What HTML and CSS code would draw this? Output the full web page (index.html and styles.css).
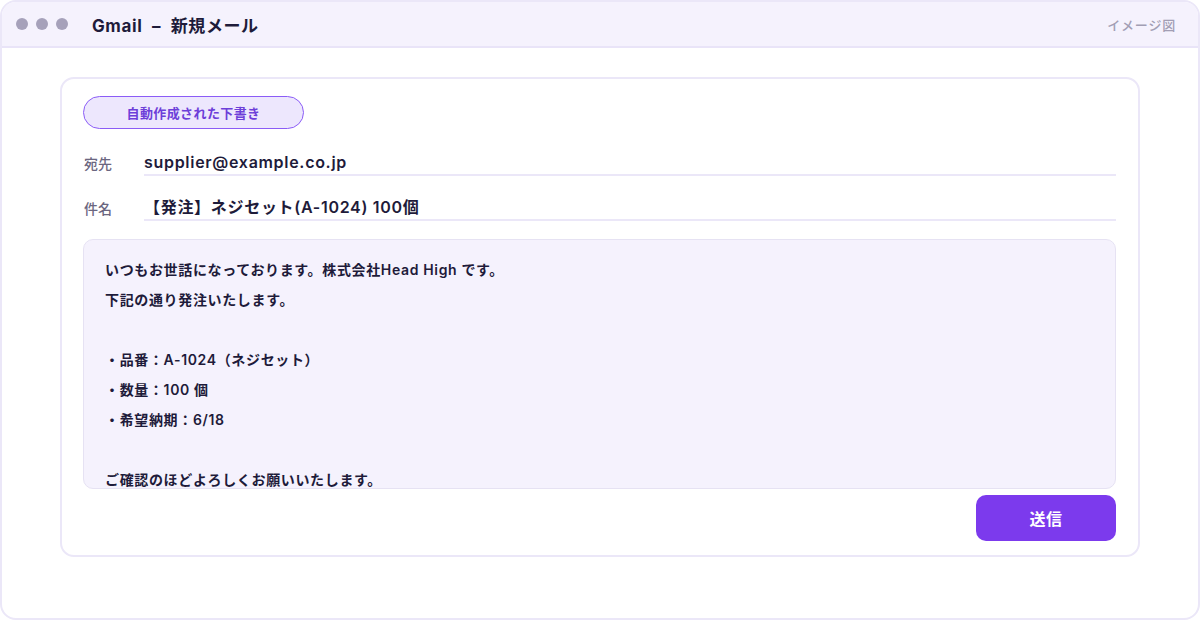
FILE: index.html
```html
<!DOCTYPE html>
<html>
  <head>
    <title>Gmail - 新規メール</title>
    <link rel="stylesheet" href="styles.css">
  </head>
  <body>
    <div class="window">
      <div class="titlebar">
        <div class="dots">
          <span class="dot"></span>
          <span class="dot"></span>
          <span class="dot"></span>
        </div>
        <div class="title">Gmail <span class="dash">–</span> 新規メール</div>
        <div class="note">イメージ図</div>
      </div>
      <div class="content">
        <div class="card">
          <div class="badge">自動作成された下書き</div>
          <div class="field first">
            <div class="label">宛先</div>
            <div class="value">supplier@example.co.jp</div>
          </div>
          <div class="field">
            <div class="label">件名</div>
            <div class="value">【発注】ネジセット(A-1024) 100個</div>
          </div>
          <div class="mailbody">
            <p>いつもお世話になっております。株式会社Head High です。</p>
            <p>下記の通り発注いたします。</p>
            <p>&nbsp;</p>
            <p>・品番：A-1024（ネジセット）</p>
            <p>・数量：100 個</p>
            <p>・希望納期：6/18</p>
            <p>&nbsp;</p>
            <p>ご確認のほどよろしくお願いいたします。</p>
          </div>
          <div class="actions">
            <button class="send">送信</button>
          </div>
        </div>
      </div>
    </div>
  </body>
</html>
```

FILE: styles.css
```css
body {
  margin: 0;
  font-family: Inter, "Noto Sans CJK JP", sans-serif;
  color: #1e1b3a;
  background: #fff;
}
.window {
  width: 1200px;
  height: 620px;
  box-sizing: border-box;
  border: 2px solid #ebe7f8;
  border-radius: 16px;
  overflow: hidden;
  background: #fff;
}
.titlebar {
  height: 44px;
  background: #f5f2fd;
  border-bottom: 2px solid #e9e4f8;
  display: flex;
  align-items: center;
  padding: 0 22px 0 14px;
}
.dots {
  display: flex;
  gap: 8px;
}
.dot {
  width: 12px;
  height: 12px;
  border-radius: 50%;
  background: #a6a1ba;
}
.title {
  margin-left: 24px;
  font-size: 17px;
  font-weight: 700;
  letter-spacing: 0.6px;
  color: #1e1b3a;
}
.dash {
  margin: 0 5px;
}
.note {
  margin-left: auto;
  font-size: 13px;
  font-weight: 500;
  letter-spacing: 0.8px;
  color: #a29eb4;
}
.content {
  padding: 29px 58px 0;
}
.card {
  height: 480px;
  box-sizing: border-box;
  border: 2px solid #ebe7f8;
  border-radius: 14px;
  padding: 17px 22px 0 21px;
  display: flex;
  flex-direction: column;
}
.badge {
  align-self: flex-start;
  width: 221px;
  height: 33px;
  box-sizing: border-box;
  border: 1.5px solid #8b5cf6;
  border-radius: 17px;
  background: #ede7fd;
  color: #6d3fd9;
  font-size: 13px;
  font-weight: 600;
  letter-spacing: 0.4px;
  display: flex;
  align-items: center;
  justify-content: center;
}
.field {
  display: flex;
  align-items: flex-end;
  margin-top: 19px;
}
.field.first {
  margin-top: 21px;
}
.label {
  width: 60px;
  font-size: 14px;
  font-weight: 500;
  color: #6b6680;
  line-height: 24px;
  padding-left: 1px;
}
.value {
  flex: 1;
  font-size: 16px;
  font-weight: 600;
  letter-spacing: 0.7px;
  line-height: 24px;
  border-bottom: 2px solid #ebe7f8;
}
.mailbody {
  margin-top: 18px;
  height: 250px;
  box-sizing: border-box;
  background: #f5f2fd;
  border: 1px solid #e6e2f3;
  border-radius: 10px;
  padding: 15px 21px 0;
  overflow: hidden;
}
.mailbody p {
  margin: 0;
  font-size: 14px;
  font-weight: 600;
  line-height: 30px;
  letter-spacing: 0.65px;
}
.actions {
  display: flex;
  justify-content: flex-end;
  margin-top: 6px;
}
.send {
  width: 140px;
  height: 46px;
  border: none;
  border-radius: 10px;
  background: #7c3aed;
  color: #fff;
  font-family: inherit;
  font-size: 16px;
  font-weight: 700;
  letter-spacing: 0.5px;
}
```
